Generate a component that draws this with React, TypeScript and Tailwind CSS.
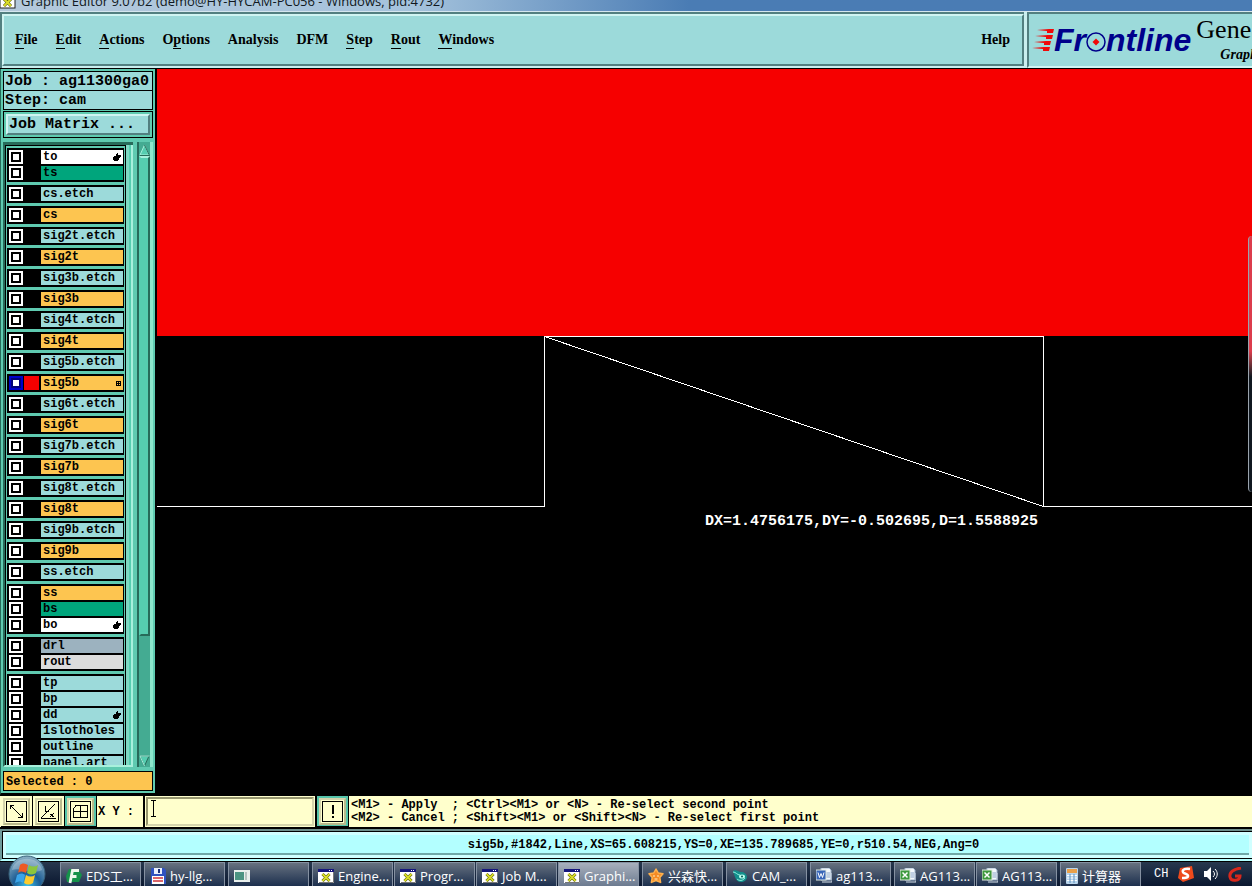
import React, { useState } from "react";
import clsx from "clsx";

type Tone = "white" | "green" | "cyan" | "orange" | "slate" | "gray";

interface Layer {
  name: string;
  tone: Tone;
  hand?: boolean;
  grid?: boolean;
}

const tones: Record<Tone, string> = {
  white: "bg-white",
  green: "bg-[#00a57c]",
  cyan: "bg-[#9cdada]",
  orange: "bg-[#fdc550]",
  slate: "bg-[#9cb2bf]",
  gray: "bg-[#dcdcdc]",
};

const signal = (name: string): Layer[][] => [
  [{ name: `${name}.etch`, tone: "cyan" }],
  [{ name, tone: "orange", grid: name === "sig5b" }],
];

const layerGroups: Layer[][] = [
  [
    { name: "to", tone: "white", hand: true },
    { name: "ts", tone: "green" },
  ],
  ...["cs", "sig2t", "sig3b", "sig4t", "sig5b", "sig6t", "sig7b", "sig8t", "sig9b"].flatMap(signal),
  [{ name: "ss.etch", tone: "cyan" }],
  [
    { name: "ss", tone: "orange" },
    { name: "bs", tone: "green" },
    { name: "bo", tone: "white", hand: true },
  ],
  [
    { name: "drl", tone: "slate" },
    { name: "rout", tone: "gray" },
  ],
  [
    { name: "tp", tone: "cyan" },
    { name: "bp", tone: "cyan" },
    { name: "dd", tone: "cyan", hand: true },
    { name: "1slotholes", tone: "cyan" },
    { name: "outline", tone: "cyan" },
    { name: "panel.art", tone: "cyan" },
  ],
];

// label and index of the underlined letter
const menus: [string, number][] = [
  ["File", 0],
  ["Edit", 0],
  ["Actions", 0],
  ["Options", 1],
  ["Analysis", -1],
  ["DFM", -1],
  ["Step", 0],
  ["Rout", 0],
  ["Windows", 0],
];

const mono = "font-['Liberation_Mono',monospace] font-bold";
const serif = "font-['Liberation_Serif',serif]";
const sans = "font-['Open_Sans','Noto_Sans_CJK_SC',sans-serif]";

const XWindowIcon = () => (
  <svg width="16" height="14" viewBox="0 0 16 14" className="shrink-0">
    <rect width="16" height="14" fill="#fff" />
    <rect width="16" height="3" fill="#15157c" />
    <path d="M11 1.5h1M13 1.5h1" stroke="#fff" />
    <path d="M15.5 3v10.5H1" stroke="#777" fill="none" />
    <path d="M4.500 5l7 7M11.500 5l-7 7" stroke="#55550a" strokeWidth="3" />
    <path d="M4.500 5l7 7M11.500 5l-7 7" stroke="#d8dc28" strokeWidth="1.800" />
  </svg>
);

const EdsIcon = () => (
  <svg width="16" height="16" viewBox="0 0 16 16" className="shrink-0">
    <path d="M3 1h9l4 6-3 7H1L0 8z" fill="#15924a" />
    <path d="M4 15L6.500 2.500H13M5.500 8.500h5" stroke="#eef8ee" strokeWidth="2.800" fill="none" />
  </svg>
);

const FloppyIcon = () => (
  <svg width="16" height="16" viewBox="0 0 16 16" className="shrink-0">
    <path d="M1 0h13l2 2v14H1z" fill="#2f52c0" />
    <rect x="4" width="8" height="6" fill="#e9eefb" />
    <rect x="8" y="1" width="2" height="4" fill="#1b2f7e" />
    <rect x="2" y="8" width="12" height="8" fill="#fff" />
    <path d="M3 10h10M3 13h10" stroke="#d0353b" strokeWidth="1.500" />
  </svg>
);

const PanelIcon = () => (
  <svg width="16" height="12" viewBox="0 0 16 12" className="shrink-0">
    <rect width="16" height="12" fill="#e8efec" />
    <rect x="1" y="2" width="9" height="8" fill="#4b9482" />
    <rect x="11" y="2" width="2" height="8" fill="#b5c4c0" />
  </svg>
);

const StarIcon = () => (
  <svg width="16" height="16" viewBox="0 0 16 16" className="shrink-0">
    <path
      d="M8 1l2.300 4 4.700.8-3.200 3.600.8 5L8 12.500 3.400 14.400l.8-5L1 5.800 5.700 5z"
      fill="#f68b24"
      stroke="#ffb14d"
      strokeWidth="1.500"
      strokeLinejoin="round"
    />
    <path d="M6 7v2M10 7v2M6.500 11h3" stroke="#fff0c4" />
  </svg>
);

const CamIcon = () => (
  <svg width="16" height="14" viewBox="0 0 16 14" className="shrink-0">
    <path d="M1 2c3-2 5 1 8 1s6 2 6 5-3 5-6 5-5-2-6-5z" fill="#138f8c" />
    <path d="M1 3c3 0 4 3 7 3M5 10c2 2 6 2 8-1" stroke="#8df0df" fill="none" />
    <ellipse cx="10" cy="7.500" rx="3" ry="2" fill="#b9fff0" />
    <circle cx="10" cy="7.500" r="1" fill="#06524f" />
  </svg>
);

const OfficeIcon = ({ letter }: { letter: "W" | "X" }) => (
  <svg width="16" height="15" viewBox="0 0 16 15" className="shrink-0">
    <path d="M5 0h8l2 2v10H5z" fill="#f4f8fc" stroke="#9fb4cc" />
    <path d="M8 5h6M8 7h6M8 9h6" stroke="#8da7c9" />
    <rect
      y="2"
      width="10"
      height="10"
      fill={letter === "W" ? "#3865b8" : "#3f9a3d"}
      stroke="#dfe9df"
    />
    {letter === "W" ? (
      <path d="M2 4.500l1.500 5L5 5.500l1.500 4 1.500-5" stroke="#fff" fill="none" />
    ) : (
      <path d="M2.500 4.500l5 5M7.500 4.500l-5 5" stroke="#fff" strokeWidth="1.500" />
    )}
    <path d="M6 14h10V5" stroke="#d8e3ee" fill="none" />
  </svg>
);

const CalcIcon = () => (
  <svg width="12" height="16" viewBox="0 0 12 16" className="shrink-0">
    <rect width="12" height="16" rx="1" fill="#b9d5ec" />
    <rect x="1" y="1" width="10" height="4" fill="#e9a04a" />
    <path d="M1 7.500h10M1 10h10M1 12.500h10" stroke="#fff" />
    <path d="M4 6v9M8 6v9" stroke="#5d8fbd" />
  </svg>
);

const StartOrb = () => (
  <svg width="38" height="38" viewBox="0 0 38 38">
    <defs>
      <radialGradient id="orb" cx="50%" cy="85%" r="85%">
        <stop offset="0" stopColor="#36c4f4" />
        <stop offset="0.450" stopColor="#1d5d94" />
        <stop offset="1" stopColor="#8fb2c4" />
      </radialGradient>
    </defs>
    <circle cx="19" cy="19" r="18" fill="url(#orb)" stroke="#38627a" />
    <path d="M4 15C7 0 31 0 34 15 26 20 12 12 4 15z" fill="#fff" opacity="0.250" />
    <path d="M12 10c2-2 5-2 8 0l-2 8c-3-2-6-2-8 0z" fill="#ee5a24" />
    <path d="M21 10c3 2 6 2 9 0l-2 8c-3 2-6 2-9 0z" fill="#8cc63c" />
    <path d="M9 20c3-2 6-2 8 0l-2 8c-2-2-5-2-8 0z" fill="#3ba4e8" />
    <path d="M18 20c3 2 6 2 9 0l-2 8c-3 2-6 2-9 0z" fill="#fdcb2e" />
  </svg>
);

const tasks: { label: string; icon: React.ReactNode; active?: boolean; joined?: boolean }[] = [
  { label: "EDS工...", icon: <EdsIcon /> },
  { label: "hy-llg...", icon: <FloppyIcon /> },
  { label: "", icon: <PanelIcon /> },
  { label: "Engine...", icon: <XWindowIcon />, joined: true },
  { label: "Progr...", icon: <XWindowIcon />, joined: true },
  { label: "Job M...", icon: <XWindowIcon />, joined: true },
  { label: "Graphi...", icon: <XWindowIcon />, active: true },
  { label: "兴森快...", icon: <StarIcon /> },
  { label: "CAM_...", icon: <CamIcon /> },
  { label: "ag113...", icon: <OfficeIcon letter="W" /> },
  { label: "AG113...", icon: <OfficeIcon letter="X" />, joined: true },
  { label: "AG113...", icon: <OfficeIcon letter="X" /> },
  { label: "计算器", icon: <CalcIcon /> },
];

const TitleBar = () => (
  <div className="flex h-[11px] shrink-0 items-end gap-[5px] overflow-hidden bg-linear-to-r from-[#b4c9dc] via-[#a5c3dc] via-33% to-[#4a7cb4] to-55%">
    <svg width="16" height="11" viewBox="0 0 16 11" className="shrink-0">
      <rect x="0" y="-4" width="15" height="12" fill="#fff" stroke="#222" />
      <path d="M4 -1l7 7M11 -1l-7 7" stroke="#55550a" strokeWidth="3" />
      <path d="M4 -1l7 7M11 -1l-7 7" stroke="#d8dc28" strokeWidth="2" />
    </svg>
    <span className={`${sans} text-[13px] leading-5 whitespace-nowrap text-[#101820]`}>
      Graphic Editor 9.07b2 (demo@HY-HYCAM-PC056 - Windows, pid:4732)
    </span>
  </div>
);

const MenuLabel = ({ text, mark }: { text: string; mark: number }) => {
  if (mark < 0) return <>{text}</>;
  return (
    <>
      {text.slice(0, mark)}
      <span className="border-b border-black pb-px">{text[mark]}</span>
      {text.slice(mark + 1)}
    </>
  );
};

const Header = () => (
  <header className={`${serif} flex h-[58px] shrink-0 border-t border-b border-t-[#d5e6ee] border-b-black bg-[#c9eeee] text-black`}>
    <nav className="mr-[3px] flex flex-1 border-t-2 border-l-2 border-[#527f80] pb-[2px]">
      <div className="flex flex-1 items-center justify-between border-2 border-t-[#d0f4f2] border-r-[#527f80] border-b-[#527f80] border-l-[#d0f4f2] bg-[#9cdada] pr-3 pl-[11px] text-sm font-bold">
        <div className="flex gap-[18px]">
          {menus.map(([text, mark]) => (
            <button key={text} className="leading-5">
              <MenuLabel text={text} mark={mark} />
            </button>
          ))}
        </div>
        <button className="leading-5">Help</button>
      </div>
    </nav>
    <div className="flex w-[225px] shrink-0 overflow-hidden border-t-2 border-b-2 border-l-2 border-t-[#527f80] border-b-[#d0f4f2] border-l-[#527f80] bg-[#9cdada] pl-[3px]">
      <div className="flex h-[51px] items-center">
        <svg width="22" height="24" viewBox="0 0 22 24" className="shrink-0">
          <path
            d="M5 2l12-1h5l-1 4h-6v-2zM3 8l13-1h5l-1 4h-6V9zM2 14l12-1h5l-1 4h-6v-2zM0 20l12-1h6l-1 4h-6v-2z"
            fill="#f00808"
          />
        </svg>
        <div className="flex items-center font-['Liberation_Sans',sans-serif] text-[32px] leading-8 font-bold text-[#00008b] italic">
          <span>Fr</span>
          <svg width="20" height="20" viewBox="0 0 20 20" className="mt-1 shrink-0">
            <circle cx="10" cy="10" r="9" fill="none" stroke="#00008b" strokeWidth="1.500" />
            <path d="M10 6.500l3.500 3.500-3.500 3.500L6.500 10z" fill="#f00808" />
          </svg>
          <span>ntline</span>
        </div>
      </div>
      <div className="flex flex-1 flex-col items-start pl-[5px] whitespace-nowrap">
        <span className="text-[26px] leading-[31px]">Gene</span>
        <span className="ml-6 text-sm leading-5 font-bold italic">Graph</span>
      </div>
    </div>
  </header>
);

const HandIcon = () => (
  <svg width="8" height="8" viewBox="0 0 8 8" className="shrink-0">
    <path d="M4 0h1v2h3v2H7v1H6v2H5v1H1V7H0V4h1V3h2V1h1z" fill="#000" />
  </svg>
);

const GridIcon = () => (
  <svg width="5" height="5" viewBox="0 0 5 5" shapeRendering="crispEdges" className="shrink-0">
    <path d="M.5.500h4v4h-4zM2.500 0v5M0 2.500h5" fill="none" stroke="#000" />
  </svg>
);

const LayerRow = ({ layer }: { layer: Layer }) => {
  const [shown, setShown] = useState(Boolean(layer.grid));
  return (
    <label className="flex h-4 items-center pl-px">
      <input
        type="checkbox"
        checked={shown}
        onChange={() => setShown(!shown)}
        className="size-[14px] shrink-0 appearance-none border-2 border-white bg-white inset-shadow-[0_0_0_2px_#000] checked:border-[#0000c8] checked:inset-shadow-[0_0_0_2px_#000078]"
      />
      <span className={clsx("mx-px h-[14px] w-[15px] shrink-0", shown ? "bg-[#f60000]" : "bg-black")} />
      <span className={clsx("ml-px flex h-[14px] flex-1 items-center justify-between px-[2px]", tones[layer.tone])}>
        <span className="leading-4">{layer.name}</span>
        {layer.hand && <HandIcon />}
        {layer.grid && <GridIcon />}
      </span>
    </label>
  );
};

const Scrollbar = () => (
  <div className="ml-1 flex w-4 flex-col border-r-[3px] border-l-2 border-r-[#8ce6cc] border-l-[#276b5a] bg-[#44ab92] pt-[2px]">
    <svg width="11" height="12" viewBox="0 0 11 12" className="shrink-0">
      <path d="M5.500 1L10 11H1z" fill="#56cdb0" stroke="#a8f0dc" />
      <path d="M5.500 1L10.500 11.500H1" stroke="#276b5a" fill="none" />
    </svg>
    <div className="flex-4 border-2 border-t-[#a8f0dc] border-r-[#276b5a] border-b-[#276b5a] border-l-[#56cdb0] bg-[#56cdb0]" />
    <div className="flex-1" />
    <svg width="11" height="12" viewBox="0 0 11 12" className="shrink-0">
      <path d="M1 1h9L5.500 11z" fill="#56cdb0" stroke="#276b5a" />
      <path d="M10.500 1H1L5.500 11" stroke="#a8f0dc" fill="none" />
    </svg>
  </div>
);

const Sidebar = () => (
  <aside className={`${mono} flex w-[157px] shrink-0 flex-col border-r-2 border-b-2 border-l border-black border-l-[#276b5a] bg-[#5fcab0] p-[2px] text-black`}>
    <div className="flex shrink-0 flex-col text-[15px] leading-5 whitespace-pre">
      <div className="h-5 border border-black bg-[#9cdada] pl-px">Job : ag11300ga0</div>
      <div className="h-[19px] border border-t-0 border-black bg-[#9cdada] pl-px">Step: cam</div>
    </div>
    <div className="mt-px h-[27px] shrink-0 border border-black p-[2px]">
      <button className="flex h-full w-full items-center border-2 border-t-[#d0f4f2] border-r-[#527f80] border-b-[#527f80] border-l-[#d0f4f2] bg-[#9cdada] pt-[2px] pl-px text-[15px]">
        Job Matrix ...
      </button>
    </div>
    <div className="mt-1 flex min-h-0 flex-1">
      <div className="flex flex-1 overflow-hidden border-t-[3px] border-b-2 border-l-2 border-t-[#276b5a] border-b-[#a8f0dc] border-l-[#276b5a]">
        <div className="flex min-w-0 flex-1 flex-col border-t border-r border-l border-black pt-[2px]">
          <div className="flex flex-col gap-[3px] px-px text-xs">
            {layerGroups.map((group) => (
              <div key={group[0].name} className="bg-black p-px">
                {group.map((layer) => (
                  <LayerRow key={layer.name} layer={layer} />
                ))}
              </div>
            ))}
          </div>
        </div>
        <div className="w-[7px] border-r-2 border-l-[3px] border-r-[#a8f0dc] border-l-[#7fd9c3] bg-[#a8f0dc]">
          <div className="h-full w-[2px] bg-[#56cdb0]" />
        </div>
      </div>
      <Scrollbar />
    </div>
    <div className="mt-1 flex h-5 shrink-0 items-center border border-black bg-[#fdc550] pt-px pl-[2px] text-xs">Selected : 0</div>
  </aside>
);

const Canvas = () => (
  <main className="relative min-w-0 flex-1 overflow-hidden bg-black">
    <svg width="100%" height="100%" shapeRendering="crispEdges" className="block">
      <rect width="100%" height="267" fill="#f60000" />
      <path
        d="M0 437.500H387.500V267.500H886.500V437.500H4000M387.500 267.500L886.500 437.500"
        fill="none"
        stroke="#fff"
      />
    </svg>
    <p className={`${mono} absolute top-[444px] left-[548px] text-[15px] leading-[18px] whitespace-nowrap text-white`}>
      DX=1.4756175,DY=-0.502695,D=1.5588925
    </p>
    <div className="absolute top-[167px] right-0 h-64 w-1 rounded-l border-l border-[#9aa3ad] bg-linear-to-b from-[#dc3c4c] from-45% to-[#101820] to-55%" />
  </main>
);

const ToolButton = ({ label, teal, children }: { label: string; teal?: boolean; children: React.ReactNode }) => (
  <button
    aria-label={label}
    className={clsx("flex shrink-0 items-center justify-center border-r border-b border-black p-[2px]", teal ? "bg-[#56c5aa]" : "bg-[#ffffcc]")}
  >
    <span className="border-2 border-t-[#d5d5ac] border-r-[#b9b98c] border-b-[#b9b98c] border-l-[#d5d5ac] bg-[#ffffcc] p-px">
      <svg width="21" height="21" viewBox="0 0 21 21" fill="none" stroke="#000" shapeRendering="crispEdges">
        <rect x="0.500" y="0.500" width="20" height="20" />
        {children}
      </svg>
    </span>
  </button>
);

const Toolbar = () => (
  <div className={`${mono} flex h-[34px] shrink-0 border-t border-b-2 border-black bg-[#ffffcc] pl-px text-xs text-black`}>
    <ToolButton label="Measure">
      <path d="M4 4l12 12M4 8V4h4M16 12v4h-4" />
    </ToolButton>
    <ToolButton label="Angle">
      <path d="M3 17L17 3M3 17h15M7 5v5h4M12 13l4 3M16 12l-4 4" />
    </ToolButton>
    <ToolButton label="Grid" teal>
      <path d="M6 4.500h11v12H3.500v-9zM10.500 4v13M3 10.500h14" />
    </ToolButton>
    <label htmlFor="xy" className="flex w-[46px] shrink-0 items-center pl-px whitespace-pre">
      X Y :
    </label>
    <div className="w-[174px] shrink-0 border-x-2 border-black p-px">
      <div className="flex h-full border-2 border-t-[#96966e] border-r-[#d5d5ac] border-b-[#d5d5ac] border-l-[#96966e]">
        <svg width="7" height="17" viewBox="0 0 7 17" className="mt-px ml-[2px] shrink-0" shapeRendering="crispEdges">
          <path d="M1 .5h5M3.500 1v15M1 16.500h5" stroke="#000" />
        </svg>
        <input id="xy" type="text" className="min-w-0 flex-1 bg-transparent outline-none" />
      </div>
    </div>
    <ToolButton label="Apply" teal>
      <path d="M10.500 4v9M10.500 15v2" strokeWidth="2" />
    </ToolButton>
    <div className="flex-1 overflow-hidden pt-[3px] pl-[2px] leading-[13px] whitespace-pre">
      <p>{"<M1> - Apply  ; <Ctrl><M1> or <N> - Re-select second point"}</p>
      <p>{"<M2> - Cancel ; <Shift><M1> or <Shift><N> - Re-select first point"}</p>
    </div>
  </div>
);

const StatusBar = () => (
  <div className="shrink-0 border-t-2 border-b-2 border-l-2 border-t-[#6f8f8c] border-b-[#b3ffff] border-l-[#6f9c9c] bg-[#b3ffff]">
    <div className="border-y border-l border-black bg-[#d0ffff] p-[3px]">
      <div className={`${mono} h-5 border-b-2 border-[#6fa8a8] bg-[#b3ffff] pl-48 text-center text-xs leading-5 text-black`}>
        sig5b,#1842,Line,XS=65.608215,YS=0,XE=135.789685,YE=0,r510.54,NEG,Ang=0
      </div>
    </div>
  </div>
);

const Taskbar = () => (
  <footer className={`${sans} relative flex h-[25px] shrink-0 border-t border-black bg-linear-to-b from-[#28384e] to-[#0b1830] text-sm text-white`}>
    <button aria-label="Start" className="absolute -top-[7px] left-2">
      <StartOrb />
    </button>
    <div className="flex min-w-0 flex-1 pl-[60px]">
      {tasks.map((task, i) => (
        <button
          key={i}
          aria-label={task.label || "Window"}
          className={clsx(
            "flex w-[81px] shrink-0 items-center gap-1 overflow-hidden border-t border-r border-l border-[#8591a2] pt-[2px] pl-[5px] whitespace-nowrap",
            task.joined ? "mr-px" : "mr-[3px]",
            task.active
              ? "bg-linear-to-b from-[#a8b0bd] to-[#6d7b90]"
              : "bg-linear-to-b from-[#67717f] to-[#1d304e]",
          )}
        >
          {task.icon}
          <span className="text-[13px] leading-5">{task.label}</span>
        </button>
      ))}
    </div>
    <div className="flex w-[98px] shrink-0 items-center gap-[10px]">
      <span className="font-['Liberation_Mono',monospace] text-xs">CH</span>
      <svg width="16" height="16" viewBox="0 0 16 16" className="shrink-0">
        <path d="M2 2l12-2 2 12-11 4-5-4z" fill="#ee4a1c" />
        <path d="M12 3C4 2 3 6 7 7.500S12 12 4 12" stroke="#fff" strokeWidth="2.500" fill="none" />
      </svg>
      <svg width="14" height="14" viewBox="0 0 14 14" className="shrink-0">
        <path d="M0 4h3l4-4v14l-4-4H0z" fill="#fff" />
        <path d="M9 4c2 2 2 4 0 6M11 2c3 3 3 7 0 10" stroke="#fff" fill="none" />
      </svg>
      <svg width="14" height="15" viewBox="0 0 14 15" className="shrink-0">
        <path d="M13 1C6 2 1 5 2 10s10 4 10-1H7" stroke="#d8281c" strokeWidth="3" fill="none" />
      </svg>
    </div>
  </footer>
);

export default function App() {
  return (
    <div className="flex h-screen flex-col overflow-hidden bg-black">
      <TitleBar />
      <Header />
      <div className="flex min-h-0 flex-1">
        <Sidebar />
        <Canvas />
      </div>
      <Toolbar />
      <StatusBar />
      <Taskbar />
    </div>
  );
}
